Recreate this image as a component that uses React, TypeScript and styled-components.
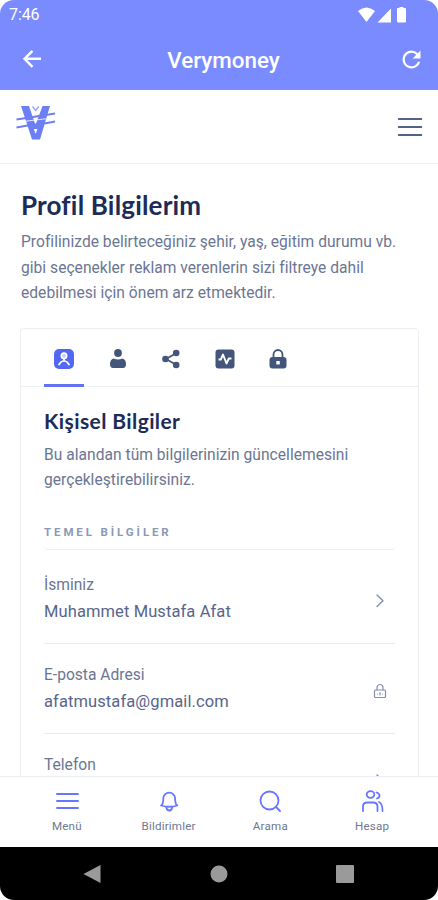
import React from "react";
import styled, { createGlobalStyle } from "styled-components";

const GlobalStyle = createGlobalStyle`
  * { box-sizing: border-box; }
  body { margin: 0; background: #fff; font-family: Roboto, sans-serif; color: #526484; }
  h1, h2, h3, p { margin: 0; }
  svg { display: block; flex: none; }
`;

const Phone = styled.div`
  display: flex;
  flex-direction: column;
  width: 438px;
  height: 900px;
  overflow: hidden;
  border-radius: 14px;
  background: #fff;
`;

const StatusBar = styled.div`
  display: flex;
  justify-content: space-between;
  align-items: center;
  height: 29px;
  flex: none;
  padding: 0 30px 0 9px;
  background: #798bff;
  color: #fff;
  font-size: 16px;
  letter-spacing: -0.1px;
`;

const AppBar = styled.div`
  display: grid;
  grid-template-columns: 32px 1fr 27px;
  align-items: center;
  height: 61px;
  flex: none;
  padding: 0 13px 0 16px;
  background: #798bff;
  color: #fff;
`;

const AppTitle = styled.div`
  text-align: center;
  font-size: 22.4px;
  font-weight: 500;
  line-height: 30px;
  padding: 0 0 0 1px;
`;

const SiteHeader = styled.header`
  display: flex;
  justify-content: space-between;
  align-items: flex-start;
  height: 74px;
  flex: none;
  padding: 14px 15px 0;
  border-bottom: 1px solid #f0f1f5;
`;

const MenuSlot = styled.div`
  padding-top: 12px;
`;

const Content = styled.main`
  flex: 1;
  min-height: 0;
  overflow: hidden;
  padding: 24px 19px 0 20px;
`;

const PageTitle = styled.h1`
  font: 700 26px/34px Lato, sans-serif;
  color: #1c2b57;
  letter-spacing: 0.18px;
  padding-left: 1px;
  white-space: nowrap;
`;

const Copy = styled.p<{ $indent?: boolean }>`
  padding-top: 8px;
  padding-left: ${(p) => (p.$indent ? "1px" : "0")};
  font-size: 15.6px;
  line-height: 25.6px;
  letter-spacing: 0.02px;
  color: #6b7693;
  white-space: nowrap;
`;

const Card = styled.section`
  height: 600px;
  margin-top: 21px;
  border: 1px solid #ebeef3;
  border-radius: 4px;
`;

const Tabs = styled.nav`
  display: flex;
  height: 58px;
  padding-left: 23px;
  gap: 13.6px;
  border-bottom: 1px solid #ebeef3;
`;

const Tab = styled.div<{ $active?: boolean }>`
  display: flex;
  justify-content: center;
  width: 40px;
  height: 58px;
  padding-top: 19px;
  color: ${(p) => (p.$active ? "#5368f2" : "#43557b")};
  border-bottom: 3px solid ${(p) => (p.$active ? "#6472f4" : "transparent")};
`;

const CardBody = styled.div`
  padding: 20px 23px 0;
`;

const CardTitle = styled.h2`
  font: 700 21px/28px Lato, sans-serif;
  color: #1c2b57;
  letter-spacing: 0.4px;
  white-space: nowrap;
`;

const GroupTitle = styled.h3`
  height: 31px;
  margin-top: 25px;
  padding-top: 6px;
  border-bottom: 1px solid #ebeef3;
  border-radius: 4px;
  font-size: 11.5px;
  line-height: 14px;
  font-weight: 700;
  letter-spacing: 2.9px;
  color: #8b99b4;
`;

const Row = styled.div`
  display: flex;
  align-items: flex-start;
  justify-content: space-between;
  height: 90px;
  padding: 18px 6px 0 0;
  border-bottom: 1px solid #e8ebf1;
  color: #8390ae;
  &:first-of-type { height: 94px; padding-top: 22px; }
`;

const Label = styled.div`
  font-size: 15.6px;
  line-height: 26px;
  color: #6b7693;
`;

const Value = styled.div`
  font-size: 16.5px;
  line-height: 27px;
  letter-spacing: 0.1px;
  color: #58658a;
`;

const RowIcon = styled.div`
  display: flex;
  justify-content: center;
  width: 18px;
  padding-top: 20px;
`;

const BottomNav = styled.nav`
  display: grid;
  grid-template-columns: repeat(4, 1fr);
  height: 71px;
  flex: none;
  padding: 12px 15px 0 16px;
  background: #fff;
  border-top: 1px solid #ebeef3;
`;

const NavItem = styled.div`
  display: flex;
  flex-direction: column;
  align-items: center;
  color: #6676ff;
`;

const NavLabel = styled.span`
  margin-top: 6px;
  font-size: 11.6px;
  line-height: 15px;
  letter-spacing: 0.2px;
  color: #6e7891;
`;

const SystemBar = styled.div`
  display: flex;
  justify-content: space-between;
  align-items: center;
  height: 53px;
  flex: none;
  padding: 0 84px 0 83px;
  background: #000;
  color: #9a9a9a;
`;

const stroke = {
  fill: "none",
  stroke: "currentColor",
  strokeLinecap: "round" as const,
  strokeLinejoin: "round" as const,
};

const StatusIcons = () => (
  <svg width="50" height="18" viewBox="0 0 50 18" fill="currentColor">
    <path d="M0 5Q8.500-2 17 5L8.500 16Z" />
    <path d="M33 2.500V16.500H19.500Z" />
    <path d="M41.500 2V1h4v1H47q1 0 1 1v12.500q0 1-1 1h-7q-1 0-1-1V3q0-1 1-1Z" />
  </svg>
);

const BackIcon = () => (
  <svg width="32" height="32" viewBox="0 0 32 32" {...stroke} strokeLinecap="butt" strokeLinejoin="miter" strokeWidth="2.4">
    <path d="M25 14.800H9M16.500 6.800l-8 8 8 8" />
  </svg>
);

const RefreshIcon = () => (
  <svg width="27" height="27" viewBox="0 0 24 24" fill="currentColor">
    <path d="M17.650 6.350A7.958 7.958 0 0 0 12 4a8 8 0 1 0 7.730 10h-2.080A6 6 0 1 1 12 6c1.660 0 3.140.690 4.220 1.780L13 11h7V4l-2.350 2.350z" />
  </svg>
);

const Logo = () => (
  <svg width="42" height="38" viewBox="0 0 42 38" fill="none">
    <path d="M6 2h8l6.500 19L27.500 2H35L25 35.500h-8Z" fill="#6d7ff5" />
    <path d="M17.500 2.500l3.200 4 3.200-4" stroke="#98a4f7" strokeWidth="1.400" />
    <path d="M10 17.300Q20 16 31 14.800" stroke="#fff" strokeWidth="0.800" />
    <path d="M1.500 15.500Q11 14 21 12.500T40 9.500M1.500 23.500Q11 21.500 21 20.500T40 17.500" stroke="#6d7ff5" strokeWidth="1.900" />
    <path d="M18.800 25h3.600L20.700 30Z" fill="#fff" />
  </svg>
);

const MenuIcon = () => (
  <svg width="26" height="22" viewBox="0 0 26 22" {...stroke} stroke="#526484" strokeWidth="2">
    <path d="M1.800 3h22.500M1.800 11h22.500M1.800 19h22.500" />
  </svg>
);

const ProfileTabIcon = () => (
  <svg width="22" height="22" viewBox="0 0 22 22">
    <rect x="1" y="1" width="20" height="20" rx="5" fill="currentColor" />
    <g fill="none" stroke="#fff" strokeWidth="1.800" strokeLinecap="round">
      <circle cx="11" cy="7.800" r="2.600" fill="#c3c9fb" />
      <path d="M11 11v2M6 16.500q1.500-3 5-4 3.500 1 5 4" />
    </g>
  </svg>
);

const PersonIcon = () => (
  <svg width="22" height="22" viewBox="0 0 22 22" fill="currentColor">
    <circle cx="11" cy="5" r="3.900" />
    <path d="M6.500 10.500q4.500 2 9 0 3.500 1 3.500 5.500 0 4-3 4H6q-3 0-3-4Q3 11.500 6.500 10.500Z" />
  </svg>
);

const ShareIcon = () => (
  <svg width="22" height="22" viewBox="0 0 22 22" fill="currentColor">
    <path d="M16.500 5 6 11l10.500 6" fill="none" stroke="currentColor" strokeWidth="1.800" />
    <circle cx="16.200" cy="5" r="3.300" />
    <circle cx="5.500" cy="11" r="3.300" />
    <circle cx="16.200" cy="17" r="3.300" />
  </svg>
);

const ActivityIcon = () => (
  <svg width="22" height="22" viewBox="0 0 22 22">
    <rect x="1.500" y="1.500" width="19" height="19" rx="3" fill="currentColor" />
    <path d="M4.500 11.500h2.300L9 6.500l3.500 9 2.300-5h2.700" fill="none" stroke="#fff" strokeWidth="1.900" strokeLinejoin="round" />
  </svg>
);

const LockTabIcon = () => (
  <svg width="22" height="22" viewBox="0 0 22 22">
    <path d="M6.500 10V6.500a4.500 4.500 0 0 1 9 0V10" fill="none" stroke="currentColor" strokeWidth="1.800" />
    <rect x="2.500" y="9" width="17" height="11.500" rx="3" fill="currentColor" />
    <rect x="9.300" y="13" width="3.500" height="3.500" rx="0.500" fill="#fff" />
  </svg>
);

const ChevronIcon = () => (
  <svg width="18" height="18" viewBox="0 0 18 18" {...stroke} strokeWidth="1.400">
    <path d="m6 3 6 5.800-6 5.800" />
  </svg>
);

const RowLockIcon = () => (
  <svg width="16" height="18" viewBox="0 0 16 18" {...stroke} strokeWidth="1.200">
    <rect x="2.500" y="8" width="11" height="7.500" rx="1" />
    <path d="M5 8V5.500a3 3 0 0 1 6 0V8M8 10.500V13M5.500 12h.1M10.500 12h.1" />
  </svg>
);

const NavMenuIcon = () => (
  <svg width="24" height="24" viewBox="0 0 24 24" {...stroke} strokeWidth="1.900">
    <path d="M2 5h21M2 12h21M2 19h21" />
  </svg>
);

const BellIcon = () => (
  <svg width="24" height="24" viewBox="0 0 24 24" {...stroke} strokeWidth="1.800">
    <path d="M4 16.500q2.300-1 2.300-7a5.900 5.900 0 0 1 11.800 0q0 6 2.300 7Q12.200 19 4 16.500Z" />
    <path d="M9.300 18q.5 3.500 3 3.500t3-3.500" />
  </svg>
);

const SearchIcon = () => (
  <svg width="24" height="24" viewBox="0 0 24 24" {...stroke} strokeWidth="1.800">
    <circle cx="11.500" cy="11.500" r="9" />
    <path d="m18 18 4 4" />
  </svg>
);

const UsersIcon = () => (
  <svg width="24" height="24" viewBox="0 0 24 24" {...stroke} strokeWidth="1.800">
    <ellipse cx="10.500" cy="5.500" rx="3.800" ry="3.300" />
    <path d="M3 22v-4.500q0-4 4.500-4h5.500q4.500 0 4.500 4V22M16.500 3.500q3 .8 3 3T17 9.500M19 13q3.500 1.200 3.500 9" />
  </svg>
);

const SystemBackIcon = () => (
  <svg width="18" height="20" viewBox="0 0 18 20" fill="currentColor">
    <path d="M0.500 10 17.500 1v18Z" />
  </svg>
);

const SystemHomeIcon = () => (
  <svg width="18" height="18" viewBox="0 0 18 18" fill="currentColor">
    <circle cx="9" cy="9" r="8.500" />
  </svg>
);

const SystemRecentIcon = () => (
  <svg width="18" height="18" viewBox="0 0 18 18" fill="currentColor">
    <rect width="18" height="18" rx="1" />
  </svg>
);

const tabs = [ProfileTabIcon, PersonIcon, ShareIcon, ActivityIcon, LockTabIcon];

const rows = [
  { label: "İsminiz", value: "Muhammet Mustafa Afat", Icon: ChevronIcon },
  { label: "E-posta Adresi", value: "afatmustafa@gmail.com", Icon: RowLockIcon },
  { label: "Telefon", value: "", Icon: ChevronIcon },
];

const navItems = [
  { label: "Menü", Icon: NavMenuIcon },
  { label: "Bildirimler", Icon: BellIcon },
  { label: "Arama", Icon: SearchIcon },
  { label: "Hesap", Icon: UsersIcon },
];

export default function App() {
  return (
    <>
      <GlobalStyle />
      <Phone>
        <StatusBar>
          <span>7:46</span>
          <StatusIcons />
        </StatusBar>
        <AppBar>
          <BackIcon />
          <AppTitle>Verymoney</AppTitle>
          <RefreshIcon />
        </AppBar>
        <SiteHeader>
          <Logo />
          <MenuSlot>
            <MenuIcon />
          </MenuSlot>
        </SiteHeader>
        <Content>
          <PageTitle>Profil Bilgilerim</PageTitle>
          <Copy $indent>
            Profilinizde belirteceğiniz şehir, yaş, eğitim durumu vb.
            <br />
            gibi seçenekler reklam verenlerin sizi filtreye dahil
            <br />
            edebilmesi için önem arz etmektedir.
          </Copy>
          <Card>
            <Tabs>
              {tabs.map((Icon, i) => (
                <Tab key={i} $active={i === 0}>
                  <Icon />
                </Tab>
              ))}
            </Tabs>
            <CardBody>
              <CardTitle>Kişisel Bilgiler</CardTitle>
              <Copy>
                Bu alandan tüm bilgilerinizin güncellemesini
                <br />
                gerçekleştirebilirsiniz.
              </Copy>
              <GroupTitle>TEMEL BİLGİLER</GroupTitle>
              {rows.map(({ label, value, Icon }) => (
                <Row key={label}>
                  <div>
                    <Label>{label}</Label>
                    <Value>{value}</Value>
                  </div>
                  <RowIcon>
                    <Icon />
                  </RowIcon>
                </Row>
              ))}
            </CardBody>
          </Card>
        </Content>
        <BottomNav>
          {navItems.map(({ label, Icon }) => (
            <NavItem key={label}>
              <Icon />
              <NavLabel>{label}</NavLabel>
            </NavItem>
          ))}
        </BottomNav>
        <SystemBar>
          <SystemBackIcon />
          <SystemHomeIcon />
          <SystemRecentIcon />
        </SystemBar>
      </Phone>
    </>
  );
}
